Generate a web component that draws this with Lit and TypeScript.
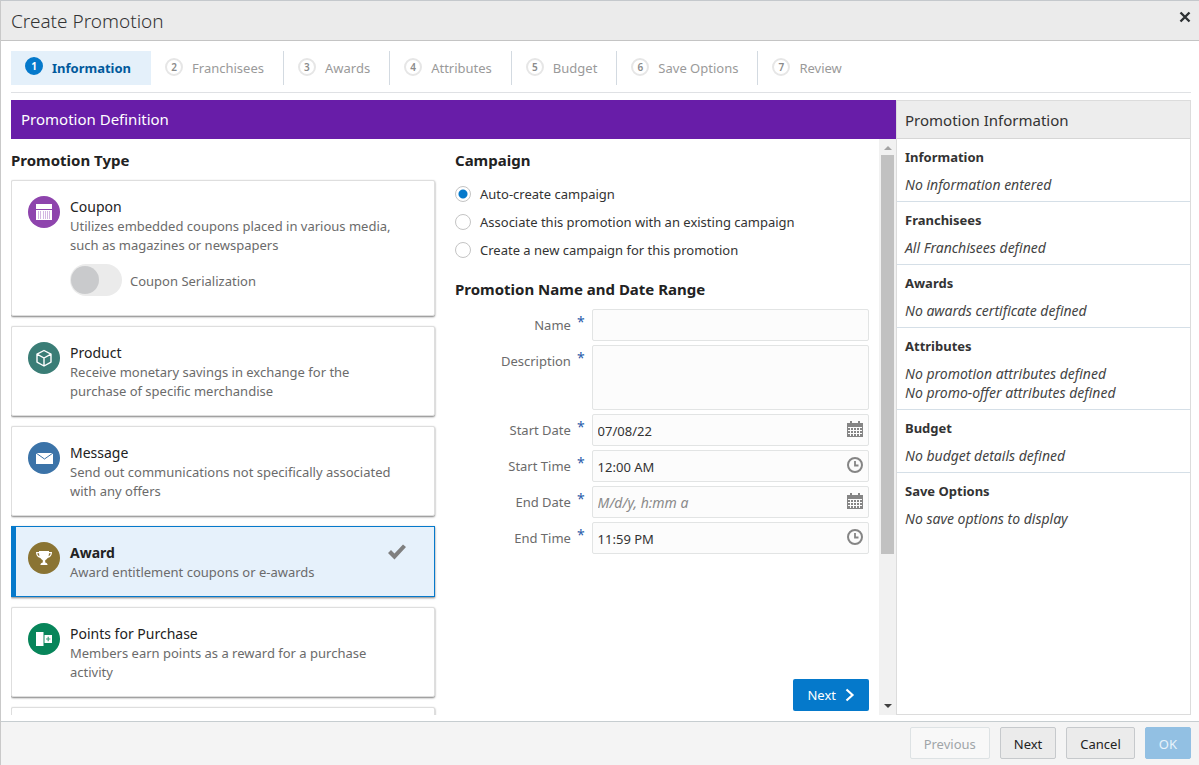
import { LitElement, html, css, svg, nothing } from "lit";
import { customElement, state } from "lit/decorators.js";
import { classMap } from "lit/directives/class-map.js";

interface PromotionType {
  id: string;
  title: string;
  text: string;
  serialization?: boolean;
}

interface Field {
  id: string;
  label: string;
  value: string;
  placeholder?: string;
  picker: "date" | "time";
}

const STEPS = ["Information", "Franchisees", "Awards", "Attributes", "Budget", "Save Options", "Review"];

const TYPES: PromotionType[] = [
  {
    id: "coupon",
    title: "Coupon",
    text: "Utilizes embedded coupons placed in various media, such as magazines or newspapers",
    serialization: true,
  },
  {
    id: "product",
    title: "Product",
    text: "Receive monetary savings in exchange for the purchase of specific merchandise",
  },
  {
    id: "message",
    title: "Message",
    text: "Send out communications not specifically associated with any offers",
  },
  { id: "award", title: "Award", text: "Award entitlement coupons or e-awards" },
  {
    id: "points",
    title: "Points for Purchase",
    text: "Members earn points as a reward for a purchase activity",
  },
];

const CAMPAIGNS = [
  "Auto-create campaign",
  "Associate this promotion with an existing campaign",
  "Create a new campaign for this promotion",
];

const FIELDS: Field[] = [
  { id: "start-date", label: "Start Date", value: "07/08/22", picker: "date" },
  { id: "start-time", label: "Start Time", value: "12:00 AM", picker: "time" },
  { id: "end-date", label: "End Date", value: "", placeholder: "M/d/y, h:mm a", picker: "date" },
  { id: "end-time", label: "End Time", value: "11:59 PM", picker: "time" },
];

const SUMMARY = [
  { title: "Information", lines: ["No information entered"] },
  { title: "Franchisees", lines: ["All Franchisees defined"] },
  { title: "Awards", lines: ["No awards certificate defined"] },
  { title: "Attributes", lines: ["No promotion attributes defined", "No promo-offer attributes defined"] },
  { title: "Budget", lines: ["No budget details defined"] },
  { title: "Save Options", lines: ["No save options to display"] },
];

const GLYPHS: Record<string, unknown> = {
  coupon: svg`
    <path fill="#fff" d="M8 8h16v5H8zM8 14h16v10H8z"/>
    <path stroke="#d3b8e2" stroke-width="1" d="M10.500 15v8M12.500 15v8M15.500 15v8M17.500 15v8M19.500 15v8M21.500 15v8"/>`,
  product: svg`
    <path fill="none" stroke="#fff" stroke-width="1.400" stroke-linejoin="round"
      d="M16 8.500l7 3.600v8L16 24l-7-3.900v-8zM9 12.100l7 3.900 7-3.900M16 16v8"/>`,
  message: svg`
    <path fill="#fff" d="M8 11h17v11H8z"/>
    <path fill="none" stroke="#3b73a8" stroke-width="1" d="M8 11l8.500 6L25 11"/>`,
  award: svg`
    <path fill="#fff" d="M11 9h10v1h3c0 3-1.500 5.500-4.300 6-.7 1-1.400 1.700-2.500 2.200V20.500c1.200.3 2.300 1 2.400 2.500h-7.200c.1-1.500 1.200-2.200 2.400-2.500v-2.300c-1.100-.5-1.800-1.200-2.500-2.200C9.500 15.500 8 13 8 10h3z"/>
    <path fill="#8a7433" d="M9.300 11.200H11c.1 1 .2 2 .5 3-1.300-.5-2-1.500-2.200-3zM22.700 11.200H21c-.1 1-.2 2-.5 3 1.300-.5 2-1.500 2.200-3z"/>`,
  points: svg`
    <path fill="#fff" d="M8 9h7.500v14H8zM16.500 12h7.500v8h-7.500z"/>
    <path stroke="#3da07c" stroke-width="1.200" d="M20.200 13.800v4.400M18 16h4.400"/>`,
};

const calendarIcon = html`<svg viewBox="0 0 16 16" width="16" height="16" aria-hidden="true">
  <path fill="#858585" d="M0 2h3V0h2v2h6V0h2v2h3v14H0z" />
  <path stroke="#fcfcfc" stroke-width="1" d="M1 6.500h14M1 9.500h14M1 12.500h14M3.500 6v9M6.500 6v9M9.500 6v9M12.500 6v9" />
</svg>`;

const clockIcon = html`<svg viewBox="0 0 16 16" width="16" height="16" aria-hidden="true">
  <circle cx="8" cy="8" r="7" fill="none" stroke="#858585" stroke-width="2" />
  <path fill="none" stroke="#858585" stroke-width="1.800" d="M8 4v4.500h3.500" />
</svg>`;

@customElement("app-root")
export class AppRoot extends LitElement {
  @state() private selected = "award";
  @state() private campaign = 0;

  static styles = css`
    :host {
      display: block;
      font-family: "Noto Sans", "Open Sans", sans-serif;
      font-size: 13px;
      line-height: 19px;
      color: #333;
    }
    * {
      box-sizing: border-box;
    }
    h1, h2, h3, p, ol, ul {
      margin: 0;
      padding: 0;
    }
    ol, ul {
      list-style: none;
    }
    button, input, textarea {
      font: inherit;
      color: inherit;
      margin: 0;
    }
    button {
      cursor: pointer;
    }
    svg {
      display: block;
    }
    .dialog {
      display: flex;
      flex-direction: column;
      height: 100vh;
      border-top: 1px solid #c4c8cc;
      border-left: 1px solid #c9c9c9;
      background: #fff;
    }
    .titlebar {
      display: flex;
      justify-content: space-between;
      align-items: center;
      height: 40px;
      flex: none;
      padding: 0 8px 0 10px;
      background: #ebebeb;
      border-bottom: 1px solid #c4c4c4;
    }
    .titlebar h1 {
      font-size: 19px;
      line-height: 24px;
      font-weight: 300;
    }
    .close {
      align-self: flex-start;
      margin-top: 10px;
      padding: 0;
      border: 0;
      background: none;
    }
    .content {
      flex: 1;
      min-height: 0;
      display: flex;
      flex-direction: column;
      padding: 10px 8px 6px 10px;
    }
    .steps {
      display: flex;
      flex: none;
      padding-bottom: 7px;
      border-bottom: 1px solid #dfe1e4;
    }
    .step {
      border-right: 1px solid #d3dae1;
    }
    .step:first-child, .step:last-child {
      border-right: 0;
    }
    .step button {
      display: flex;
      align-items: center;
      gap: 9px;
      height: 34px;
      padding: 0 19px 0 14px;
      border: 0;
      background: none;
      color: #9a9a9a;
    }
    .step .num {
      width: 18px;
      height: 18px;
      margin-bottom: 2px;
      border: 2px solid #e6e6e6;
      border-radius: 50%;
      font-size: 10px;
      line-height: 14px;
      font-weight: 600;
      text-align: center;
      color: #8a8a8a;
    }
    .step.current button {
      padding-right: 20px;
      background: #e4f0fa;
      color: #00599c;
      font-weight: 700;
    }
    .step.current .num {
      margin-bottom: 4px;
      background: #0579cb;
      border-color: #0579cb;
      color: #fff;
      font-weight: 700;
    }
    .panels {
      flex: 1;
      min-height: 0;
      display: grid;
      grid-template-columns: minmax(0, 3fr) minmax(0, 1fr);
      margin-top: 7px;
    }
    .definition {
      display: flex;
      flex-direction: column;
      min-height: 0;
    }
    .banner {
      flex: none;
      padding: 0 10px;
      background: #681da8;
      color: #fff;
      font-size: 15px;
      line-height: 39px;
      font-weight: 400;
    }
    .scroller {
      flex: 1;
      min-height: 0;
      display: grid;
      grid-template-columns: minmax(0, 1fr) minmax(0, 1fr) 17px;
      grid-template-rows: minmax(0, 1fr);
    }
    .types {
      overflow: hidden;
      padding-right: 10px;
    }
    .section {
      font-size: 15px;
      line-height: 20px;
      font-weight: 700;
      color: #222;
    }
    .types .section {
      padding: 11px 0 10px;
    }
    .cards {
      display: flex;
      flex-direction: column;
      gap: 10px;
    }
    .card {
      display: flex;
      gap: 10px;
      padding: 15px 16px;
      border: 1px solid #dedede;
      border-radius: 2px;
      background: #fff;
      box-shadow: 0 1px 2px rgba(0, 0, 0, 0.5);
    }
    .card .badge {
      flex: none;
    }
    .card .words {
      flex: 1;
      padding: 1px 20px 0 0;
      margin-bottom: -1px;
    }
    .card .name {
      display: block;
      padding: 0;
      border: 0;
      background: none;
      font-size: 14px;
      line-height: 20px;
      color: #222;
    }
    .card .text {
      color: #6b6b6b;
    }
    .card.next {
      height: 90px;
    }
    .card.selected {
      padding-left: 12px;
      border-color: #0579cb;
      border-left-width: 5px;
      border-radius: 0;
      background: #e6f1fb;
    }
    .card.selected .name {
      font-weight: 700;
    }
    .card .tick {
      margin: 2px 12px 0 0;
    }
    .serial {
      display: flex;
      align-items: center;
      gap: 8px;
      margin: 9px 0 5px;
      color: #6b6b6b;
    }
    .serial label {
      padding-top: 2px;
    }
    .switch {
      appearance: none;
      display: flex;
      align-items: center;
      width: 52px;
      height: 32px;
      padding: 2px 1px;
      border-radius: 16px;
      background: #ebebeb;
    }
    .switch::before {
      content: "";
      width: 28px;
      height: 28px;
      border-radius: 50%;
      background: #c9cacc;
    }
    .details {
      display: flex;
      flex-direction: column;
      padding: 11px 10px 4px;
    }
    .radios {
      padding: 10px 0 15px;
    }
    .radio {
      display: flex;
      align-items: center;
      gap: 9px;
      height: 28px;
    }
    .radio input {
      appearance: none;
      width: 16px;
      height: 16px;
      border: 1px solid #c4c4c4;
      border-radius: 50%;
      background: #fff;
    }
    .radio input:checked {
      background: radial-gradient(circle, #0579cb 4px, #fff 5px);
    }
    .form {
      display: grid;
      grid-template-columns: 33% minmax(0, 1fr);
      row-gap: 4px;
      margin-top: 10px;
    }
    .form label {
      display: flex;
      justify-content: flex-end;
      gap: 6px;
      padding: 7px 7px 0 0;
      color: #6b6b6b;
    }
    .form .star {
      font-size: 14px;
      line-height: 12px;
      color: #2a5caa;
    }
    .box {
      display: flex;
      align-items: flex-start;
      border: 1px solid #e2e4e4;
      border-radius: 2px;
      background: #fcfcfc;
    }
    .box input, .box textarea {
      flex: 1;
      min-width: 0;
      height: 30px;
      padding: 2px 5px 0;
      border: 0;
      outline: 0;
      background: none;
      resize: none;
    }
    .box textarea {
      height: 63px;
    }
    .box input::placeholder {
      color: #8a8a8a;
      font-size: 14px;
      font-style: italic;
    }
    .box button {
      padding: 6px 5px;
      border: 0;
      background: none;
    }
    .go {
      display: flex;
      align-items: center;
      align-self: flex-end;
      gap: 9px;
      height: 32px;
      margin-top: auto;
      padding: 0 14px;
      border: 0;
      border-radius: 2px;
      background: #0579cb;
      color: #fff;
    }
    .bar {
      display: flex;
      flex-direction: column;
      align-items: center;
      justify-content: space-between;
      background: #f1f1f1;
      padding: 7px 2px 7px;
    }
    .bar .thumb {
      width: 13px;
      flex: 0 0 71%;
      margin: 5px 0 auto;
      background: #c1c1c1;
    }
    .info {
      display: flex;
      flex-direction: column;
      border: 1px solid #dcdcdc;
    }
    .info h2 {
      padding: 1px 8px 0;
      background: #ededed;
      border-bottom: 1px solid #d6d6d6;
      font-size: 15px;
      line-height: 36px;
      font-weight: 400;
    }
    .summary {
      padding: 9px 8px 7px;
      border-bottom: 1px solid #d5dfe7;
    }
    .summary:last-child {
      border-bottom: 0;
    }
    .summary h3 {
      font-size: 13px;
      line-height: 19px;
      font-weight: 700;
      margin-bottom: 8px;
    }
    .summary p {
      font-size: 14px;
      font-style: italic;
      color: #444;
    }
    .footer {
      display: flex;
      justify-content: flex-end;
      gap: 10px;
      flex: none;
      height: 44px;
      padding: 5px 8px 0;
      background: #f4f4f4;
      border-top: 1px solid #c6cdd0;
    }
    .footer button {
      height: 32px;
      padding: 2px 13px 0;
      border: 1px solid #c6c9cc;
      border-radius: 2px;
      background: #ebebeb;
      color: #222;
    }
    .footer button:disabled {
      border-color: #dde2e4;
      background: #f8f8f8;
      color: #a0a5a8;
    }
    .footer .ok:disabled {
      border-color: #92c0e3;
      background: #92c0e3;
      color: #e8f3fb;
    }
  `;

  private badge(id: string) {
    const fills: Record<string, string> = {
      coupon: "#8e44ad",
      product: "#3a7d76",
      message: "#3b73a8",
      award: "#8a7433",
      points: "#07855a",
    };
    return html`<svg class="badge" viewBox="0 0 32 32" width="32" height="32" aria-hidden="true">
      <circle cx="16" cy="16" r="16" fill=${fills[id]} />
      ${GLYPHS[id]}
    </svg>`;
  }

  private card(type: PromotionType) {
    const on = this.selected === type.id;
    return html`<li class=${classMap({ card: true, selected: on })}>
      ${this.badge(type.id)}
      <div class="words">
        <button class="name" aria-pressed=${on} @click=${() => (this.selected = type.id)}>${type.title}</button>
        <p class="text">${type.text}</p>
        ${type.serialization
          ? html`<div class="serial">
              <input class="switch" type="checkbox" role="switch" id="serialization" disabled />
              <label for="serialization">Coupon Serialization</label>
            </div>`
          : nothing}
      </div>
      ${on
        ? html`<svg class="tick" viewBox="0 0 18 16" width="18" height="16" aria-hidden="true">
            <path fill="#7f7f7f" d="M0 9l3-3 3.500 3.500L15 .5 18 3 6.500 15.500z" />
          </svg>`
        : nothing}
    </li>`;
  }

  private field(field: Field) {
    return html`<label for=${field.id}>${field.label}<span class="star">*</span></label>
      <div class="box">
        <input id=${field.id} type="text" .value=${field.value} placeholder=${field.placeholder ?? ""} required />
        <button aria-label=${`Select ${field.label}`}>${field.picker === "date" ? calendarIcon : clockIcon}</button>
      </div>`;
  }

  render() {
    return html`<div class="dialog">
      <header class="titlebar">
        <h1>Create Promotion</h1>
        <button class="close" aria-label="Close">
          <svg viewBox="0 0 12 12" width="12" height="12" aria-hidden="true">
            <path stroke="#2d3133" stroke-width="2.400" d="M1.500 1.500l9 9M10.500 1.500l-9 9" />
          </svg>
        </button>
      </header>

      <div class="content">
        <ol class="steps">
          ${STEPS.map(
            (step, i) => html`<li class=${classMap({ step: true, current: i === 0 })}>
              <button><span class="num">${i + 1}</span>${step}</button>
            </li>`
          )}
        </ol>

        <div class="panels">
          <section class="definition">
            <h2 class="banner">Promotion Definition</h2>
            <div class="scroller">
              <div class="types">
                <h3 class="section">Promotion Type</h3>
                <ul class="cards">
                  ${TYPES.map((type) => this.card(type))}
                  <li class="card next"></li>
                </ul>
              </div>

              <div class="details">
                <h3 class="section">Campaign</h3>
                <div class="radios">
                  ${CAMPAIGNS.map(
                    (text, i) => html`<div class="radio">
                      <input
                        type="radio"
                        name="campaign"
                        id=${`campaign-${i}`}
                        .checked=${this.campaign === i}
                        @change=${() => (this.campaign = i)}
                      />
                      <label for=${`campaign-${i}`}>${text}</label>
                    </div>`
                  )}
                </div>

                <h3 class="section">Promotion Name and Date Range</h3>
                <div class="form">
                  <label for="name">Name<span class="star">*</span></label>
                  <div class="box"><input id="name" type="text" required /></div>
                  <label for="description">Description<span class="star">*</span></label>
                  <div class="box"><textarea id="description" required></textarea></div>
                  ${FIELDS.map((field) => this.field(field))}
                </div>

                <button class="go">
                  Next
                  <svg viewBox="0 0 10 14" width="10" height="14" aria-hidden="true">
                    <path fill="none" stroke="#fff" stroke-width="2.200" d="M1.500 1.500L7.500 7l-6 5.500" />
                  </svg>
                </button>
              </div>

              <div class="bar" aria-hidden="true">
                <svg viewBox="0 0 8 4" width="8" height="4"><path fill="#a3a3a3" d="M0 4l4-4 4 4z" /></svg>
                <div class="thumb"></div>
                <svg viewBox="0 0 8 4" width="8" height="4"><path fill="#404040" d="M0 0h8L4 4z" /></svg>
              </div>
            </div>
          </section>

          <aside class="info">
            <h2>Promotion Information</h2>
            ${SUMMARY.map(
              (item) => html`<div class="summary">
                <h3>${item.title}</h3>
                ${item.lines.map((line) => html`<p>${line}</p>`)}
              </div>`
            )}
          </aside>
        </div>
      </div>

      <footer class="footer">
        <button disabled>Previous</button>
        <button>Next</button>
        <button>Cancel</button>
        <button class="ok" disabled>OK</button>
      </footer>
    </div>`;
  }
}
